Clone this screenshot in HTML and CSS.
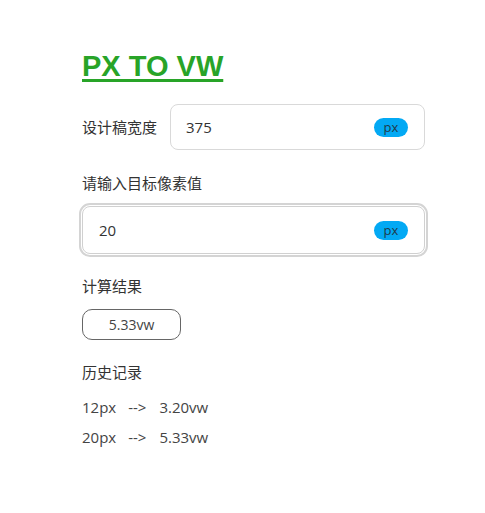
FILE: index.html
```html
<!DOCTYPE html>
<html lang="zh">
<head>
<meta charset="utf-8">
<link rel="stylesheet" href="styles.css">
</head>
<body>
<main class="page">
  <h1 class="title"><a href="#">PX TO VW</a></h1>
  <div class="row">
    <label class="label">设计稿宽度</label>
    <div class="field field-small">
      <span class="value">375</span>
      <span class="unit">px</span>
    </div>
  </div>
  <div class="label block-label">请输入目标像素值</div>
  <div class="field field-focus">
    <span class="value">20</span>
    <span class="unit">px</span>
  </div>
  <div class="label block-label result-label">计算结果</div>
  <div class="result">5.33vw</div>
  <div class="label block-label history-label">历史记录</div>
  <ul class="history">
    <li><span>12px</span><span class="arrow">--&gt;</span><span>3.20vw</span></li>
    <li><span>20px</span><span class="arrow">--&gt;</span><span>5.33vw</span></li>
  </ul>
</main>
</body>
</html>
```
FILE: styles.css
```css
html, body {
  margin: 0;
  padding: 0;
  background: #fff;
}
body {
  font-family: "Open Sans", "Noto Sans CJK SC", sans-serif;
  font-size: 15px;
  color: #333;
}
.page {
  width: 343px;
  padding: 44px 0 0 82px;
}
.title {
  margin: 0 0 16px;
  font-family: "Liberation Sans", "Noto Sans", sans-serif;
  font-size: 29px;
  font-weight: bold;
  line-height: 44px;
}
.title a {
  color: #28a428;
  text-decoration: underline;
  text-decoration-thickness: 3px;
  text-underline-offset: 3px;
}
.row {
  display: flex;
  align-items: center;
  gap: 13px;
}
.label {
  color: #333;
  line-height: 20px;
  white-space: nowrap;
}
.field {
  flex: 1;
  box-sizing: border-box;
  height: 46px;
  display: flex;
  align-items: center;
  justify-content: space-between;
  padding: 0 16px 0 15px;
  border: 1px solid #d9d9d9;
  border-radius: 8px;
  background: #fff;
}
.value {
  color: #333;
}
.unit {
  display: inline-flex;
  align-items: center;
  justify-content: center;
  width: 34px;
  height: 19px;
  border-radius: 10px;
  background: #03a9f4;
  color: #1f3a4a;
  font-size: 13px;
  line-height: 19px;
}
.block-label {
  margin-top: 23px;
}
.field-focus {
  margin-top: 13px;
  height: 48px;
  padding-left: 16px;
  border-color: #d0d0d0;
  outline: 2px solid #d4d4d4;
  outline-offset: 1px;
}
.result-label {
  margin-top: 22px;
}
.result {
  box-sizing: border-box;
  width: 99px;
  height: 31px;
  margin-top: 13px;
  border: 1px solid #666;
  border-radius: 10px;
  display: flex;
  align-items: center;
  justify-content: center;
  color: #444;
  font-size: 14px;
}
.history-label {
  margin-top: 22px;
}
.history {
  list-style: none;
  margin: 15px 0 0;
  padding: 0;
}
.history li {
  line-height: 20px;
  margin-bottom: 10px;
  color: #444;
  display: flex;
}
.arrow {
  margin: 0 13px 0 12px;
}
```
